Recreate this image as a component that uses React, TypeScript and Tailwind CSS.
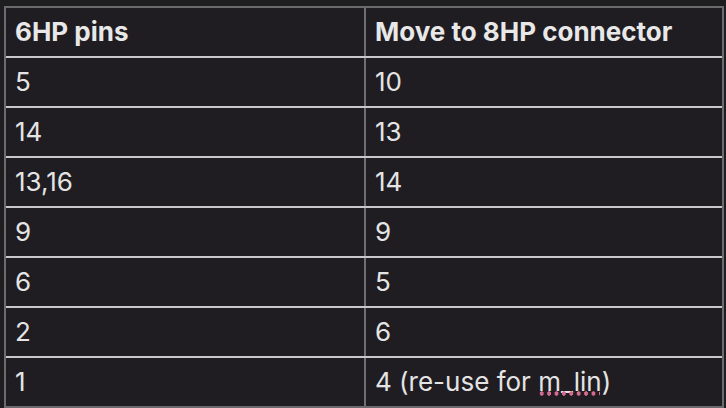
import React from "react";

const rows: [string, React.ReactNode][] = [
  ["5", "10"],
  ["14", "13"],
  ["13,16", "14"],
  ["9", "9"],
  ["6", "5"],
  ["2", "6"],
  [
    "1",
    <span key="x">
      4 (re-use for{" "}
      <span className="relative">
        m_lin
        <span className="absolute left-0 right-[2px] bottom-[1px] h-[5px] bg-[radial-gradient(circle,#d8698f_2px,transparent_2.3px)] bg-[length:7.4px_5px] bg-repeat-x"></span>
      </span>
      )
    </span>,
  ],
];

export default function App() {
  return (
    <div
      className="w-[726px] h-[408px] bg-[#1e1d20] pt-[6px] pl-[4px] overflow-hidden"
      style={{ fontFamily: "Inter, 'Noto Sans', sans-serif" }}
    >
      <div className="w-[720px] border-2 border-[#6b6a6c] bg-[#1f1d21] text-[#e4e4e4] text-[26px] leading-none">
        <div className="flex h-[48px] items-center font-bold text-[#e8e8e8]">
          <div className="w-[358px] pl-[9px]">6HP pins</div>
          <div className="flex-1 h-full flex items-center border-l-2 border-[#6f6e70] pl-[9px]">
            Move to 8HP connector
          </div>
        </div>
        {rows.map(([a, b], i) => (
          <div key={i} className="flex h-[50px] items-center border-t-2 border-[#c8c7c9]">
            <div className="w-[358px] pl-[9px]">{a}</div>
            <div className="flex-1 h-full flex items-center border-l-2 border-[#6f6e70] pl-[9px]">
              {b}
            </div>
          </div>
        ))}
      </div>
    </div>
  );
}
